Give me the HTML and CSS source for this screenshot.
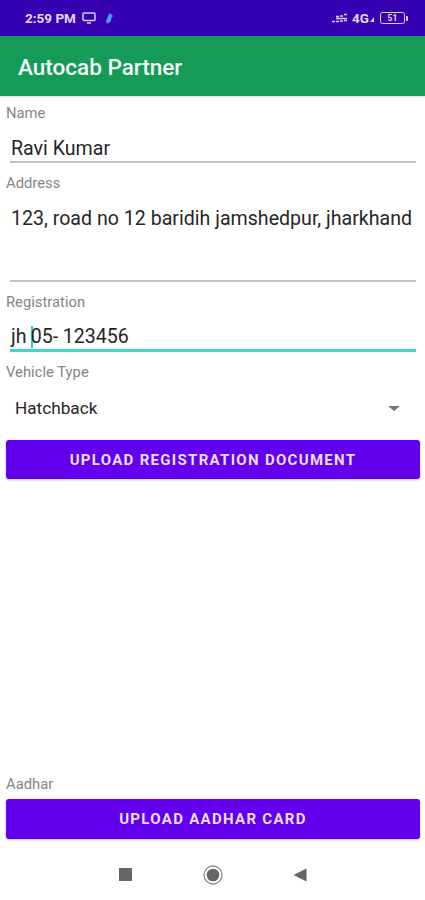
FILE: index.html
```html
<!DOCTYPE html>
<html lang="en">
<head>
<meta charset="utf-8">
<title>Autocab Partner</title>
<link rel="stylesheet" href="styles.css">
</head>
<body>
<div class="screen">
  <div class="status">
    <div class="status-left">
      <span class="time">2:59 PM</span>
      <svg class="ic-monitor" width="14" height="12" viewBox="0 0 14 12"><rect x="1" y="1" width="12" height="7.5" rx="1" fill="none" stroke="#d9cff5" stroke-width="1.5"/><path d="M5 11h4" stroke="#d9cff5" stroke-width="1.5"/></svg>
      <svg class="ic-bolt" width="9" height="11" viewBox="0 0 9 11"><path d="M5 0l3.500 3.500H7L5.500 9 2 10.500 1 8l2-5z" fill="#4f9cf5"/></svg>
    </div>
    <div class="status-right">
      <svg width="17" height="11" viewBox="0 0 17 11"><path d="M5 3.500h3M9 3h3M13 1.500h3M5 5.500h11M1 8.500h3M5 8.500h3M9 8h3M13 7.500h3" stroke="#d9cff5" stroke-width="1.500" fill="none"/></svg>
      <span class="net">4G</span>
      <svg class="ic-sig" width="4" height="5" viewBox="0 0 4 5"><path d="M0 5L4 0v5z" fill="#d9cff5"/></svg>
      <span class="battery"><span class="battery-level">51</span></span>
      <span class="battery-tip"></span>
    </div>
  </div>
  <header class="appbar">Autocab Partner</header>
  <main class="form">
    <div class="label">Name</div>
    <div class="field field-name">Ravi Kumar</div>
    <div class="label label-gap">Address</div>
    <div class="field field-address">123, road no 12 baridih jamshedpur, jharkhand</div>
    <div class="label label-gap">Registration</div>
    <div class="field field-reg">jh <span class="caret"></span>05- 123456</div>
    <div class="label label-gap">Vehicle Type</div>
    <div class="select"><span>Hatchback</span><span class="arrow"></span></div>
    <button class="btn">UPLOAD REGISTRATION DOCUMENT</button>
    <div class="spacer"></div>
    <div class="label">Aadhar</div>
    <button class="btn btn-aadhar">UPLOAD AADHAR CARD</button>
  </main>
  <nav class="navbar">
    <span class="nav-square"></span>
    <svg width="20" height="20" viewBox="0 0 20 20"><circle cx="10" cy="10" r="9" fill="none" stroke="#8a8a8a" stroke-width="1.300"/><circle cx="10" cy="10" r="6.300" fill="#666"/></svg>
    <svg width="14" height="14" viewBox="0 0 14 14"><path d="M13.500 0.500v13L0.500 7z" fill="#666"/></svg>
  </nav>
</div>
</body>
</html>
```
FILE: styles.css
```css
* { box-sizing: border-box; }
html, body { margin: 0; padding: 0; }
body { background: #fff; font-family: Roboto, "Liberation Sans", sans-serif; }
.screen { width: 425px; height: 900px; display: flex; flex-direction: column; overflow: hidden; }

.status { height: 36px; flex: none; background: #3700b3; color: #e2dbf7; display: flex; align-items: center; justify-content: space-between; padding: 0 17px 0 25px; }
.status-left, .status-right { display: flex; align-items: center; }
.time { font-size: 13.500px; font-weight: 700; margin-right: 6px; }
.ic-monitor { margin-right: 9px; }
.net { font-size: 13.500px; font-weight: 700; margin-left: 4px; }
.ic-sig { margin: 3px 6px 0 1px; }
.battery { width: 25px; height: 12px; border: 1.300px solid #d9cff5; border-radius: 2.500px; display: flex; align-items: center; justify-content: center; }
.battery-level { font-size: 8.500px; font-weight: 700; line-height: 1; }
.battery-tip { width: 2px; height: 5px; background: #d9cff5; margin-left: 1px; border-radius: 0 1px 1px 0; }

.appbar { height: 60px; flex: none; background: #159a58; color: #f2fbf6; font-size: 22.500px; font-weight: 500; display: flex; align-items: center; padding: 1px 0 0 18px; box-shadow: 0 1px 2px rgba(0,0,0,.15); }

.form { flex: 1; min-height: 0; display: flex; flex-direction: column; padding: 7px 5px 0 6px; }
.label { height: 20px; line-height: 20px; font-size: 14.800px; color: #858585; }
.label-gap { margin-top: 10px; }
.field { margin: 0 4px 0 4px; padding-left: 1px; font-size: 19.600px; line-height: 22px; color: #262626; border-bottom: 2px solid #c2c2c2; }
.field-name { height: 40px; padding-top: 15px; }
.field-address { height: 89px; padding-top: 15px; white-space: nowrap; }
.field-reg { height: 40px; padding-top: 14px; border-bottom: 3px solid #3fd8c6; word-spacing: -0.500px; }
.caret { display: inline-block; width: 2px; height: 22px; background: #2ed3c0; vertical-align: top; margin-right: -2px; }

.select { height: 50px; display: flex; align-items: center; justify-content: space-between; padding: 2px 20px 0 9px; font-size: 17.200px; color: #262626; }
.arrow { width: 0; height: 0; border-left: 6px solid transparent; border-right: 6px solid transparent; border-top: 5px solid #757575; }

.btn { height: 39px; flex: none; margin: 8px 0 0; border: 0; border-radius: 3px; background: #6200ee; color: #eadffc; font-family: inherit; font-size: 15px; font-weight: 700; letter-spacing: 1.300px; box-shadow: 0 1px 3px rgba(0,0,0,.25); }
.spacer { flex: 1; }
.btn-aadhar { height: 40px; margin-top: 5px; }

.navbar { height: 61px; flex: none; display: flex; align-items: center; justify-content: space-between; padding: 10px 118px 0 119px; }
.nav-square { width: 13px; height: 13px; background: #666; }
```
